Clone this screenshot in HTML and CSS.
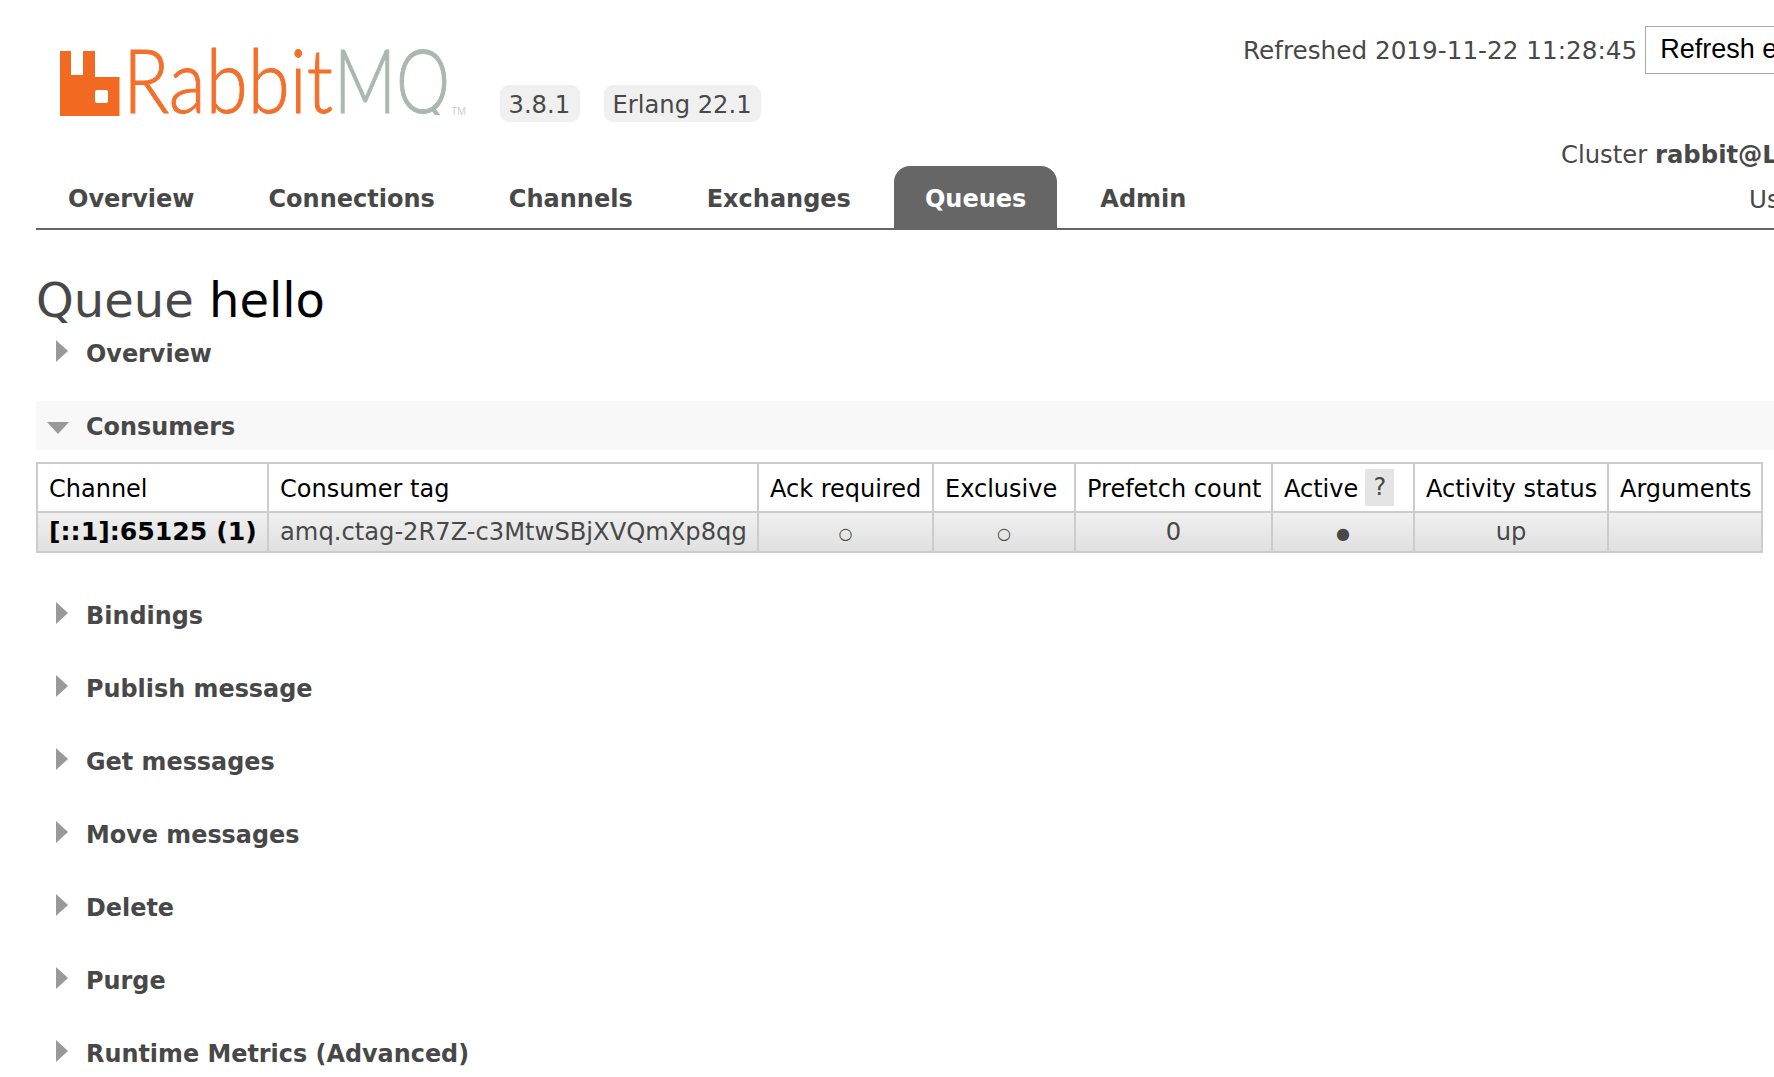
FILE: index.html
```html
<!DOCTYPE html>
<html lang="en">
<head>
<meta charset="utf-8">
<title>RabbitMQ Management</title>
<link rel="stylesheet" href="styles.css">
</head>
<body>
<div class="page">
  <header class="header">
    <div class="brand">
      <svg class="logo" viewBox="0 0 410 70" width="410" height="70" aria-label="RabbitMQ">
        <defs><clipPath id="mq-clip"><rect x="270" y="-10" width="125" height="74"/></clipPath></defs>
        <path class="logo-mark" fill-rule="evenodd" d="M0 0H11V24H23V0H35V26H59.500V65H0ZM37 39Q35 39 35 41V50Q35 52 37 52H46Q48 52 48 50V41Q48 39 46 39Z"/>
        <text class="logo-rabbit" x="63" y="62" textLength="210" lengthAdjust="spacingAndGlyphs">Rabbit</text>
        <g clip-path="url(#mq-clip)"><text class="logo-mq" x="274" y="62" textLength="116" lengthAdjust="spacingAndGlyphs">MQ</text></g>
        <text class="logo-tm" x="391" y="64" textLength="15" lengthAdjust="spacingAndGlyphs">TM</text>
      </svg>
      <span class="badge badge-version">3.8.1</span>
      <span class="badge">Erlang 22.1</span>
    </div>
    <div class="status">
      <div class="status-refresh">
        <span>Refreshed 2019-11-22 11:28:45</span>
        <span class="select">Refresh every 5 seconds</span>
      </div>
      <div class="status-cluster">Cluster <b>rabbit@LAPTOP</b></div>
      <div class="status-user">User guest</div>
    </div>
  </header>
  <nav class="nav">
    <a class="tab">Overview</a>
    <a class="tab">Connections</a>
    <a class="tab">Channels</a>
    <a class="tab">Exchanges</a>
    <a class="tab tab-active">Queues</a>
    <a class="tab">Admin</a>
  </nav>
  <main class="main">
    <h1 class="title">Queue <b>hello</b></h1>
    <section class="section">
      <h2 class="section-head"><i class="tri"></i>Overview</h2>
    </section>
    <section class="section section-open">
      <h2 class="section-head head-open"><i class="tri-down"></i>Consumers</h2>
      <table class="consumers">
        <colgroup>
          <col class="c1"><col class="c2"><col class="c3"><col class="c4"><col class="c5"><col class="c6"><col class="c7"><col class="c8">
        </colgroup>
        <thead>
          <tr>
            <th>Channel</th><th>Consumer tag</th><th>Ack required</th><th>Exclusive</th><th>Prefetch count</th>
            <th class="active-head"><span>Active</span><span class="help">?</span></th>
            <th>Activity status</th><th>Arguments</th>
          </tr>
        </thead>
        <tbody>
          <tr>
            <td class="channel">[::1]:65125 (1)</td>
            <td>amq.ctag-2R7Z-c3MtwSBjXVQmXp8qg</td>
            <td class="center"><span class="dot">○</span></td>
            <td class="center"><span class="dot">○</span></td>
            <td class="center">0</td>
            <td class="center"><span class="dot">●</span></td>
            <td class="center">up</td>
            <td></td>
          </tr>
        </tbody>
      </table>
    </section>
    <section class="section"><h2 class="section-head"><i class="tri"></i>Bindings</h2></section>
    <section class="section"><h2 class="section-head"><i class="tri"></i>Publish message</h2></section>
    <section class="section"><h2 class="section-head"><i class="tri"></i>Get messages</h2></section>
    <section class="section"><h2 class="section-head"><i class="tri"></i>Move messages</h2></section>
    <section class="section"><h2 class="section-head"><i class="tri"></i>Delete</h2></section>
    <section class="section"><h2 class="section-head"><i class="tri"></i>Purge</h2></section>
    <section class="section"><h2 class="section-head"><i class="tri"></i>Runtime Metrics (Advanced)</h2></section>
  </main>
</div>
</body>
</html>
```
FILE: styles.css
```css
* { box-sizing: border-box; }
html, body { margin: 0; height: 100%; overflow: hidden; background: #fff; }
body { font-family: "DejaVu Sans", Verdana, sans-serif; font-size: 24.5px; color: #484848; }
.page { width: 1774px; height: 1077px; overflow: hidden; padding: 0 0 0 36px; }

.header { display: flex; height: 166px; }
.brand { flex: none; width: 1207px; display: flex; align-items: flex-start; padding-top: 51px; }
.logo { flex: none; margin-left: 24px; margin-right: 30px; overflow: visible; }
.logo-mark { fill: #f26a22; }
.logo-rabbit, .logo-mq { font-family: Lato, "Open Sans", sans-serif; font-weight: 300; font-size: 88px; stroke-width: 1px; }
.logo-rabbit { fill: #f2702c; stroke: #f2702c; }
.logo-mq { fill: #a9b8b0; stroke: #a9b8b0; }
.logo-tm { font-family: "Liberation Sans", sans-serif; font-size: 11px; fill: #c9d2cd; }
.badge { margin-top: 34px; height: 37px; line-height: 40px; padding: 0 9px 0 8.500px; background: #f0f0f0; border-radius: 9px; white-space: nowrap; flex: none; font-size: 24.2px; }
.badge-version { margin-right: 24px; padding-right: 10px; }

.status { flex: none; width: 600px; white-space: nowrap; }
.status-refresh { display: flex; align-items: center; margin-top: 26px; height: 48px; }
.status-refresh > span:first-child { font-size: 24.700px; }
.select { margin-left: 8px; height: 48px; line-height: 44px; padding: 0 14px; border: 1px solid #aaa; font-family: "Liberation Sans", sans-serif; font-size: 27px; color: #000; }
.status-cluster { margin-left: 318px; margin-top: 66px; line-height: 30px; font-size: 24.3px; }
.status-user { margin-left: 506px; margin-top: 15px; line-height: 30px; }

.nav { display: flex; gap: 12px; height: 64px; width: 1738px; padding-left: 1px; border-bottom: 2px solid #666; }
.tab { flex: none; padding: 0 31px; height: 62px; line-height: 67px; font-weight: 700; font-size: 24px; color: #484848; }
.tab-active { background: #666; color: #fff; border-radius: 16px 16px 0 0; }

.main { width: 1738px; }
.title { margin: 0; height: 98px; padding-top: 43px; font-size: 48px; line-height: 55px; font-weight: 400; color: #484848; }
.title b { font-weight: 400; color: #000; }

.section { margin-bottom: 24px; }
.section-open { margin-bottom: 37px; }
.section-head { margin: 0; position: relative; height: 49px; line-height: 52px; padding-left: 50px; font-size: 23.900px; font-weight: 700; color: #484848; white-space: nowrap; }
.head-open { background: #f8f8f8; }
.tri { position: absolute; left: 20px; top: 12px; width: 0; height: 0; border-style: solid; border-width: 11px 0 11px 12px; border-color: transparent transparent transparent #999; }
.tri-down { position: absolute; left: 11px; top: 21px; width: 0; height: 0; border-style: solid; border-width: 12px 11.5px 0; border-color: #999 transparent transparent; }

.consumers { margin-top: 12px; width: 1725px; table-layout: fixed; border-collapse: collapse; border: 2px solid #ccc; font-size: 24px; }
.c1 { width: 231px; } .c2 { width: 490px; } .c3 { width: 175px; } .c4 { width: 142px; }
.c5 { width: 197px; } .c6 { width: 142px; } .c7 { width: 194px; } .c8 { width: 154px; }
.consumers th, .consumers td { border: 2px solid #ccc; padding: 0 0 0 11px; white-space: nowrap; overflow: hidden; }
.consumers th { height: 48px; padding-top: 3px; font-weight: 400; text-align: left; color: #000; background: #fff; line-height: 44px; }
.consumers td { height: 40px; line-height: 34px; font-size: 24.2px; background: linear-gradient(#f0f0f0, #e0e0e0); }
.consumers td.center { text-align: center; padding: 0; }
.consumers td.channel { font-weight: 700; color: #000; font-size: 25.2px; }
.dot { font-size: 16px; }
.help { display: inline-block; margin-left: 7px; width: 29px; height: 37px; line-height: 36px; text-align: center; background: #e4e4e4; color: #484848; vertical-align: middle; margin-top: -6px; }
```
